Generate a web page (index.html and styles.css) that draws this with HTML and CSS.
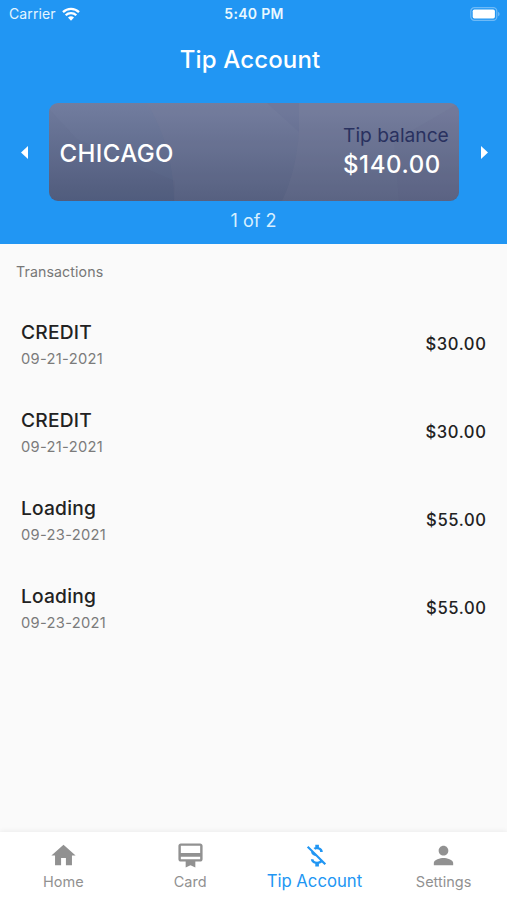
FILE: index.html
```
<!DOCTYPE html>
<html lang="en">
<head>
<meta charset="utf-8">
<title>Tip Account</title>
<link rel="stylesheet" href="styles.css">
</head>
<body>
<div class="app">
  <header class="header">
    <div class="status">
      <div class="carrier"><span>Carrier</span>
        <svg class="wifi" viewBox="0 0 18 14"><path d="M1 5.1a11.5 11.5 0 0 1 16 0M3.7 8.2a7.6 7.6 0 0 1 10.6 0" fill="none" stroke="currentColor" stroke-width="2.3"/><path d="M6 10.6a4.4 4.4 0 0 1 6 0L9 13.7z" fill="currentColor"/></svg>
      </div>
      <span class="clock">5:40 PM</span>
      <svg class="battery" viewBox="0 0 30 14"><rect x=".8" y=".7" width="26" height="12.6" rx="3.6" fill="none" stroke="currentColor" stroke-opacity=".35" stroke-width="1.2"/><rect x="2.7" y="2.5" width="22.2" height="9" rx="1.7" fill="currentColor"/><path d="M28.2 4.7c1.8.8 1.8 3.8 0 4.6z" fill="currentColor" fill-opacity=".4"/></svg>
    </div>
    <h1 class="title">Tip Account</h1>
    <div class="carousel">
      <svg class="arrow" viewBox="0 0 7 13"><path d="M7 0v13L0 6.5z" fill="currentColor"/></svg>
      <div class="account">
        <svg class="facets" viewBox="0 0 410 98" preserveAspectRatio="none">
          <path d="M0 6L28 36 126 78V98H0z" fill="#344269" fill-opacity=".03"/>
          <path d="M98 0Q125 45 125 98H410V0z" fill="#8c86a0" fill-opacity=".09"/>
          <path d="M250 0V27Q248 66 233 98H410V0z" fill="#858199" fill-opacity=".12"/>
          <path d="M218 0L250 29V0z" fill="#5b6288" fill-opacity=".12"/>
          <path d="M410 0L345 38 350 98H410z" fill="#4b5378" fill-opacity=".05"/>
        </svg>
        <span class="city">CHICAGO</span>
        <div class="balance"><span class="balance-label">Tip balance</span><span class="balance-value">$140.00</span></div>
      </div>
      <svg class="arrow" viewBox="0 0 7 13"><path d="M0 0v13l7-6.5z" fill="currentColor"/></svg>
    </div>
    <div class="pager">1 of 2</div>
  </header>
  <main class="content">
    <h2 class="section">Transactions</h2>
    <ul class="list">
      <li class="row"><div><div class="kind">CREDIT</div><div class="date">09-21-2021</div></div><span class="amount">$30.00</span></li>
      <li class="row"><div><div class="kind">CREDIT</div><div class="date">09-21-2021</div></div><span class="amount">$30.00</span></li>
      <li class="row"><div><div class="kind">Loading</div><div class="date">09-23-2021</div></div><span class="amount">$55.00</span></li>
      <li class="row"><div><div class="kind">Loading</div><div class="date">09-23-2021</div></div><span class="amount">$55.00</span></li>
    </ul>
  </main>
  <nav class="tabs">
    <a class="tab"><svg class="icon" viewBox="0 0 24 24"><path d="M10 20v-6h4v6h5v-8h3L12 3 2 12h3v8z"/></svg><span>Home</span></a>
    <a class="tab"><svg class="icon" viewBox="0 0 24 24"><path d="M20 2H4c-1.11 0-2 .89-2 2v11c0 1.11.89 2 2 2h4v5l4-2 4 2v-5h4c1.11 0 2-.89 2-2V4c0-1.11-.89-2-2-2zm0 13H4v-2h16v2zm0-5H4V4h16v6z"/></svg><span>Card</span></a>
    <a class="tab active"><svg class="icon" viewBox="0 0 24 24"><path d="M12.5 6.9c1.78 0 2.44.85 2.5 2.1h2.21c-.07-1.72-1.12-3.3-3.21-3.81V3h-3v2.16c-.53.12-1.03.3-1.48.54l1.47 1.47c.41-.17.91-.27 1.51-.27zM5.33 4.06L4.06 5.33 7.5 8.77c0 2.08 1.56 3.21 3.91 3.91l3.51 3.51c-.34.48-1.05.91-2.42.91-2.06 0-2.87-.92-2.98-2.1h-2.2c.12 2.19 1.76 3.42 3.68 3.83V21h3v-2.15c.96-.18 1.82-.55 2.45-1.12l2.22 2.22 1.27-1.27L5.33 4.06z"/></svg><span class="active-label">Tip Account</span></a>
    <a class="tab"><svg class="icon" viewBox="0 0 24 24"><path d="M12 12c2.21 0 4-1.79 4-4s-1.79-4-4-4-4 1.79-4 4 1.79 4 4 4zm0 2c-2.67 0-8 1.34-8 4v2h16v-2c0-2.66-5.33-4-8-4z"/></svg><span>Settings</span></a>
  </nav>
</div>
</body>
</html>
```
FILE: styles.css
```
* { box-sizing: border-box; }
body { margin: 0; font-family: Inter, "Liberation Sans", sans-serif; }
h1, h2, ul { margin: 0; padding: 0; font-weight: inherit; list-style: none; }
svg { display: block; }
.app { height: 900px; display: flex; flex-direction: column; background: #fafafa; white-space: nowrap; }
.header { height: 244px; background: #2196f3; color: #fff; flex: none; }
.status { height: 27px; display: grid; grid-template-columns: 1fr auto 1fr; align-items: center; padding: 0 7px 0 9px; font-size: 14px; }
.carrier { display: flex; align-items: center; gap: 6px; letter-spacing: .1px; color: #e4f5ff; }
.wifi { width: 18px; height: 14px; color: #fff; }
.clock { font-weight: 600; letter-spacing: .3px; color: #e9f8ff; margin-right: 1px; }
.battery { width: 30px; height: 14px; justify-self: end; }
.title { height: 66px; line-height: 66px; padding-right: 7px; text-align: center; font-size: 24px; font-weight: 500; letter-spacing: .15px; }
.carousel { margin-top: 10px; display: flex; align-items: center; padding: 0 19.5px 0 20.5px; gap: 21.5px; }
.arrow { width: 7px; height: 13px; flex: none; }
.account { position: relative; flex: 1; height: 98px; border-radius: 9px; overflow: hidden; display: flex; align-items: center; justify-content: space-between; padding: 0 11px 0 10.5px; background: linear-gradient(#727d9f, #515d7e); }
.facets { position: absolute; inset: 0; width: 100%; height: 100%; }
.city, .balance { position: relative; }
.city { font-size: 24px; font-weight: 500; letter-spacing: .4px; padding-top: 2px; }
.balance { display: flex; flex-direction: column; width: 105px; padding-bottom: 1px; }
.balance-label { font-size: 19.2px; line-height: 26px; color: #29315f; }
.balance-value { font-size: 24px; line-height: 34px; font-weight: 550; letter-spacing: .6px; }
.pager { height: 40px; line-height: 40px; text-align: center; font-size: 18px; color: #d7efff; }
.content { flex: 1; padding: 18px 20.5px 0 16px; }
.section { font-size: 14.2px; line-height: 20px; color: #777; letter-spacing: .1px; }
.list { padding: 18px 0 0 5px; }
.row { height: 88px; display: flex; align-items: center; justify-content: space-between; }
.kind { font-size: 19.2px; line-height: 28px; font-weight: 500; color: #222; letter-spacing: .2px; }
.date { font-size: 14.7px; line-height: 24px; color: #7b7b7b; letter-spacing: .3px; padding-top: 1px; margin-bottom: -1px; }
.amount { font-size: 16.6px; font-weight: 550; color: #222; letter-spacing: .6px; }
.tabs { height: 68px; flex: none; display: grid; grid-template-columns: repeat(4, 1fr); background: #fff; box-shadow: 0 -1px 5px rgba(0,0,0,.06); color: #919191; }
.tab { display: flex; flex-direction: column; align-items: center; padding-top: 9px; font-size: 14.5px; line-height: 23px; }
.icon { width: 29px; height: 29px; fill: currentColor; flex: none; }
.active { color: #2196f3; font-size: 16.7px; line-height: 22px; }
.active-label { margin-right: 5px; }
```
